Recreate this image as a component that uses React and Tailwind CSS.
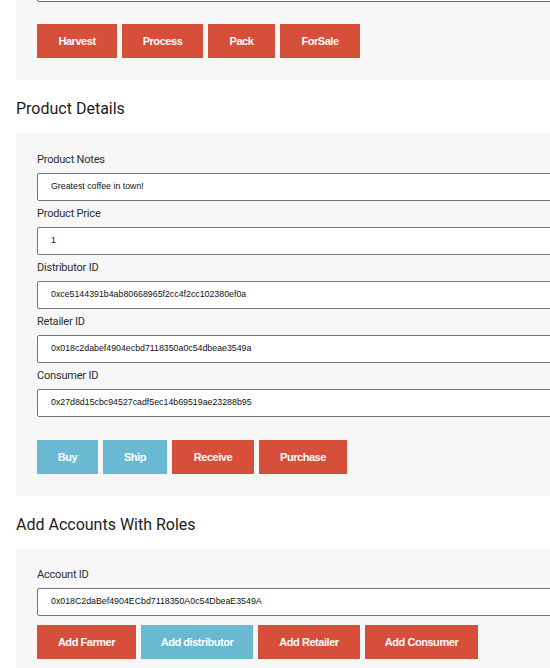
import React from "react";

const RED = "bg-[#d54f3a]";
const BLUE = "bg-[#69b9d3]";

function Btn({ label, w, color }) {
  return (
    <button
      type="button"
      className={`${color} ${w} h-[34px] shrink-0 text-white text-[11px] font-bold tracking-[-0.45px] font-['Liberation_Sans',Arial,sans-serif] flex items-center justify-center`}
    >
      {label}
    </button>
  );
}

function Field({ label, value, last }) {
  return (
    <div className={last ? "" : "mb-[6px]"}>
      <div className="h-[14px] leading-[14px] text-[11px] tracking-[-0.2px] text-[#2e2e2e] font-['Roboto',sans-serif] mb-[6px]">
        {label}
      </div>
      <div className="h-[28px] w-[900px] bg-white border border-[#767676] rounded-[2px] flex items-center pl-[13px] text-[8.8px] text-[#111111] font-['Liberation_Sans',Arial,sans-serif]">
        {value}
      </div>
    </div>
  );
}

function Heading({ children }) {
  return (
    <h2 className="mt-[19px] mb-[14px] h-[20px] leading-[20px] text-[16px] font-normal text-[#1b1b1b] font-['Roboto',sans-serif]">
      {children}
    </h2>
  );
}

export default function App() {
  return (
    <div className="w-[550px] h-[668px] overflow-hidden bg-white">
      <div className="w-[1000px] pl-[16px]">
        <div className="mt-[-46px] bg-[#f7f7f7] pt-[20px] pb-[22px] pl-[21px]">
          <div className="h-[28px] w-[900px] bg-white border border-[#6e6e6e] rounded-[2px] mb-[22px]" />
          <div className="flex gap-[5px]">
            <Btn label="Harvest" w="w-[80px]" color={RED} />
            <Btn label="Process" w="w-[81px]" color={RED} />
            <Btn label="Pack" w="w-[67px]" color={RED} />
            <Btn label="ForSale" w="w-[80px]" color={RED} />
          </div>
        </div>

        <Heading>Product Details</Heading>

        <div className="bg-[#f7f7f7] pt-[20px] pb-[22px] pl-[21px]">
          <Field label="Product Notes" value="Greatest coffee in town!" />
          <Field label="Product Price" value="1" />
          <Field label="Distributor ID" value="0xce5144391b4ab80668965f2cc4f2cc102380ef0a" />
          <Field label="Retailer ID" value="0x018c2dabef4904ecbd7118350a0c54dbeae3549a" />
          <Field label="Consumer ID" value="0x27d8d15cbc94527cadf5ec14b69519ae23288b95" last />
          <div className="flex gap-[5px] mt-[23px]">
            <Btn label="Buy" w="w-[61px]" color={BLUE} />
            <Btn label="Ship" w="w-[64px]" color={BLUE} />
            <Btn label="Receive" w="w-[82px]" color={RED} />
            <Btn label="Purchase" w="w-[88px]" color={RED} />
          </div>
        </div>

        <Heading>Add Accounts With Roles</Heading>

        <div className="bg-[#f7f7f7] pt-[19px] pb-[22px] pl-[21px]">
          <Field label="Account ID" value="0x018C2daBef4904ECbd7118350A0c54DbeaE3549A" last />
          <div className="flex gap-[5px] mt-[9px]">
            <Btn label="Add Farmer" w="w-[99px]" color={RED} />
            <Btn label="Add distributor" w="w-[112px]" color={BLUE} />
            <Btn label="Add Retailer" w="w-[102px]" color={RED} />
            <Btn label="Add Consumer" w="w-[113px]" color={RED} />
          </div>
        </div>
      </div>
    </div>
  );
}
